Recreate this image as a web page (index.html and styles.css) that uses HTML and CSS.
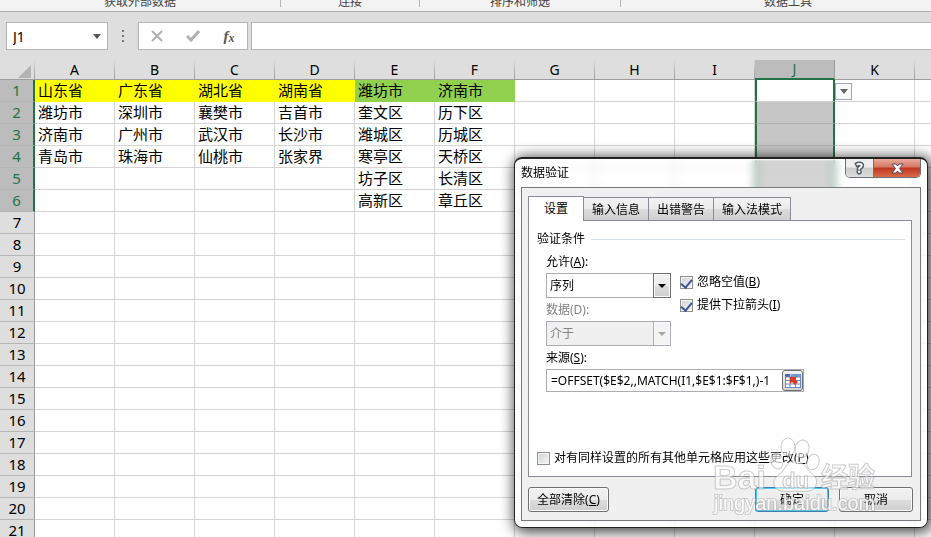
FILE: index.html
```html
<!DOCTYPE html>
<html lang="zh-CN">
<head>
    <meta charset="utf-8">
    <title>数据验证</title>
    <link rel="stylesheet" href="styles.css">
</head>
<body>
    <div class="ribbon">
        <div class="ribbon-group">获取外部数据</div>
        <div class="ribbon-group">连接</div>
        <div class="ribbon-group">排序和筛选</div>
        <div class="ribbon-group">数据工具</div>
    </div>

    <div class="formula-bar">
        <div class="name-box">
            <input type="text" value="J1" aria-label="名称框">
            <svg width="8" height="5" viewBox="0 0 8 5"><path d="M0 0h8L4 5z" fill="#555"/></svg>
        </div>
        <svg class="dots" width="4" height="12" viewBox="0 0 4 12"><path d="M1 0h2v2H1zM1 5h2v2H1zM1 10h2v2H1z" fill="#777"/></svg>
        <div class="formula-buttons">
            <button type="button" aria-label="取消输入"><svg width="12" height="12" viewBox="0 0 12 12"><path d="M1 1l10 10M11 1L1 11" stroke="#b0b0b0" stroke-width="2" fill="none"/></svg></button>
            <button type="button" aria-label="输入"><svg width="14" height="12" viewBox="0 0 14 12"><path d="M1 6l4 4 8-9" stroke="#b0b0b0" stroke-width="3" fill="none"/></svg></button>
            <button type="button" class="fx" aria-label="插入函数">f<span>x</span></button>
        </div>
        <input type="text" class="formula-input" aria-label="编辑栏">
    </div>

    <div class="sheet">
        <table class="grid">
            <thead>
                <tr id="letters">
                    <th class="corner"><svg width="13" height="13" viewBox="0 0 13 13"><path d="M13 0v13H0z" fill="#b3b3b3"/></svg></th>
                </tr>
            </thead>
            <tbody id="rows"></tbody>
        </table>
    </div>

    <button type="button" class="cell-arrow" aria-label="下拉列表"><svg width="8" height="5" viewBox="0 0 8 5"><path d="M0 0h8L4 5z" fill="#666"/></svg></button>

    <div class="dialog">
        <div class="title-bar">
            <span class="title">数据验证</span>
            <div class="window-buttons">
                <button type="button" class="help" aria-label="帮助">?</button>
                <button type="button" class="close" aria-label="关闭"><svg width="13" height="11" viewBox="0 0 13 11"><path d="M1 1h4l1.500 2L8 1h4L8.500 5.500 12 10H8L6.500 8 5 10H1l3.500-4.500z" fill="#fff" stroke="#5c4a52"/></svg></button>
            </div>
        </div>

        <form class="frame">
            <div class="tabs">
                <button type="button" class="tab active">设置</button>
                <button type="button" class="tab">输入信息</button>
                <button type="button" class="tab">出错警告</button>
                <button type="button" class="tab">输入法模式</button>
            </div>

            <div class="panel">
                <div class="section-title">验证条件</div>
                <div class="settings">
                    <div class="fields">
                        <label for="allow">允许(<u>A</u>):</label>
                        <div class="select">
                            <select id="allow"><option>序列</option></select>
                            <span class="arrow"><svg width="8" height="4" viewBox="0 0 8 4"><path d="M0 0h8L4 4z" fill="currentColor"/></svg></span>
                        </div>
                        <label for="data" class="off">数据(D):</label>
                        <div class="select off">
                            <select id="data" disabled><option>介于</option></select>
                            <span class="arrow"><svg width="8" height="4" viewBox="0 0 8 4"><path d="M0 0h8L4 4z" fill="currentColor"/></svg></span>
                        </div>
                    </div>
                    <div class="checks">
                        <label class="check"><input type="checkbox" checked><span>忽略空值(<u>B</u>)</span></label>
                        <label class="check"><input type="checkbox" checked><span>提供下拉箭头(<u>I</u>)</span></label>
                    </div>
                </div>
                <div class="source">
                    <label for="source">来源(<u>S</u>):</label>
                    <div class="source-box">
                        <input type="text" id="source" value="=OFFSET($E$2,,MATCH(I1,$E$1:$F$1,)-1">
                        <button type="button" aria-label="选择区域">
                            <svg width="16" height="14" viewBox="0 0 16 14">
                                <path d="M0 0h16v14H0z" fill="#fff"/>
                                <path d="M0 0h5v3H0z" fill="#3f69b5"/>
                                <path d="M6 0h10v3H6z" fill="#7c9bcf"/>
                                <path d="M0 3h16M0 6.500h16M0 10h16M0 13.500h16M5 0v14M10.500 0v14M15.500 0v14M.5 3v11" stroke="#6c8cc4" fill="none"/>
                                <path d="M5 3h7l-2 2 3 3-3 3-3-3-2 2z" fill="#d93a22"/>
                            </svg>
                        </button>
                    </div>
                </div>
                <label class="check apply"><input type="checkbox"><span>对有同样设置的所有其他单元格应用这些更改(<u>P</u>)</span></label>
            </div>

            <div class="actions">
                <button type="button" class="btn clear">全部清除(<u>C</u>)</button>
                <button type="button" class="btn ok">确定</button>
                <button type="button" class="btn">取消</button>
            </div>
        </form>
    </div>

    <svg class="watermark" width="176" height="84" viewBox="0 0 176 84">
        <g class="mark">
            <ellipse cx="78" cy="14" rx="7" ry="9"/>
            <ellipse cx="92" cy="16" rx="7" ry="9" transform="rotate(12 92 16)"/>
            <ellipse cx="67" cy="28" rx="6" ry="8" transform="rotate(-15 67 28)"/>
            <ellipse cx="103" cy="29" rx="6" ry="8" transform="rotate(20 103 29)"/>
            <path d="M85 28c8 0 10 6 15 11 5 4 8 7 6 13-2 7-10 7-20 6-11 1-20 1-22-6-1-6 2-8 7-12 5-5 6-12 14-12z"/>
            <text x="3" y="56" class="mark-latin">Bai</text>
            <text x="111" y="54" class="mark-cjk">经验</text>
        </g>
        <text x="72" y="55" class="mark-du">du</text>
        <text x="4" y="77" class="mark-url">jingyan.baidu.com</text>
    </svg>

    <script src="sheet.js"></script>
</body>
</html>
```

FILE: styles.css
```css
* {
    box-sizing: border-box;
}

body {
    margin: 0;
    height: 100vh;
    overflow: hidden;
    position: relative;
    display: flex;
    flex-direction: column;
    background-color: #dedede;
    color: #000;
    font-family: "Noto Sans", "Noto Sans CJK SC", sans-serif;
    font-size: 12px;
}

button, input, select {
    font: inherit;
    color: inherit;
    margin: 0;
    padding: 0;
}

svg {
    display: block;
}

/* ribbon */
.ribbon {
    display: grid;
    grid-template-columns: 281px 139px 201px 335px;
    flex: none;
    height: 12px;
    overflow: hidden;
    background-color: #f3f3f3;
    border-bottom: 1px solid #ababab;
}

.ribbon-group {
    display: flex;
    justify-content: center;
    align-items: flex-end;
    height: 7px;
    line-height: 10px;
    color: #444;
    border-right: 1px solid #b5b5b5;
}

/* formula bar */
.formula-bar {
    display: flex;
    flex: none;
    height: 48px;
    padding: 10px 0 10px 6px;
}

.name-box {
    display: flex;
    align-items: center;
    width: 102px;
    padding: 0 6px;
    background-color: #fff;
    border: 1px solid #b5b5b5;
}

.name-box input {
    flex: 1;
    min-width: 0;
    border: none;
    font-size: 14px;
}

.dots {
    align-self: center;
    margin: 0 13px;
}

.formula-buttons {
    display: flex;
    width: 110px;
    margin-right: 3px;
    background-color: #fff;
    border: 1px solid #b5b5b5;
}

.formula-buttons button {
    flex: 1;
    display: flex;
    align-items: center;
    justify-content: center;
    background: none;
    border: none;
}

.formula-buttons .fx {
    font: italic bold 15px "Liberation Serif", serif;
    color: #555;
}

.fx span {
    font-size: 12px;
    padding-top: 4px;
}

.formula-input {
    flex: 1;
    min-width: 0;
    border: 1px solid #b5b5b5;
    border-right: none;
    background-color: #fff;
}

/* sheet */
.sheet {
    flex: 1;
    min-height: 0;
    overflow: hidden;
}

.grid {
    table-layout: fixed;
    width: 995px;
    border-spacing: 0;
    font-size: 15px;
    line-height: 20px;
}

.grid th {
    width: 80px;
    height: 20px;
    padding: 0;
    font-size: 14px;
    font-weight: normal;
    line-height: 18px;
    background-color: #dedede;
    border-bottom: 1px solid #9b9b9b;
    border-right: 1px solid;
    border-image: linear-gradient(#dedede, #9b9b9b) 1;
}

.grid .corner {
    width: 35px;
}

.corner svg {
    margin: 3px 0 0 18px;
}

.grid tbody th {
    height: 22px;
    font-size: 15px;
    line-height: 21px;
    border-image: none;
    border-color: #b5b5b5;
    border-right-color: #9b9b9b;
}

.grid td {
    height: 22px;
    padding: 0 3px;
    line-height: 21px;
    white-space: nowrap;
    background-color: #fff;
    border-right: 1px solid #d4d4d4;
    border-bottom: 1px solid #d4d4d4;
}

.grid .picked {
    color: #217346;
    background-color: #bcbcbc;
}

.grid tbody .picked {
    border-right: 2px solid #217346;
}

.grid thead .picked {
    border-image: none;
    border-color: #9b9b9b;
    border-bottom: 2px solid #217346;
}

.grid .yellow {
    background-color: #ff0;
    border-color: #ff0;
}

.grid .green {
    background-color: #92d050;
    border-color: #92d050;
}

.grid .range {
    border-right: 2px solid #217346;
    border-left: 2px solid #217346;
}

.grid .fill {
    background-color: #c6c6c6;
    border-bottom-color: #b0b0b0;
}

.cell-arrow {
    position: absolute;
    left: 835px;
    top: 83px;
    display: flex;
    align-items: center;
    justify-content: center;
    width: 17px;
    height: 17px;
    background-color: #f8f9fb;
    border: 1px solid #a0a8b4;
}

/* dialog */
.dialog {
    position: absolute;
    left: 514px;
    top: 157px;
    width: 414px;
    padding: 0 6px 6px;
    background-color: rgba(255, 255, 255, 0.25);
    backdrop-filter: blur(4px);
    border: 1px solid #222;
    border-top-width: 2px;
    border-radius: 8px;
    box-shadow: inset 0 0 2px 1px #fff, 2px 2px 14px 2px rgba(0, 0, 0, 0.75);
    line-height: 20px;
}

.title-bar {
    display: flex;
    justify-content: space-between;
    height: 28px;
}

.title {
    padding-top: 4px;
}

.window-buttons {
    display: flex;
    height: 19px;
    border: 1px solid #6b6f78;
    border-top: none;
    border-radius: 0 0 5px 5px;
    overflow: hidden;
}

.window-buttons button {
    display: flex;
    align-items: center;
    justify-content: center;
    border: none;
}

.window-buttons .help {
    width: 28px;
    font-size: 14px;
    font-weight: bold;
    color: #fff;
    -webkit-text-stroke: 3px #555a66;
    paint-order: stroke fill;
    background: linear-gradient(#eee 45%, #ccc 50%, #ddd);
    border-right: 1px solid #6b6f78;
}

.window-buttons .close {
    width: 46px;
    background: linear-gradient(#e8a99b, #d57763 45%, #bd3520 50%, #d96c4c);
}

.frame {
    padding: 8px 8px 8px 6px;
    background-color: #f0f0f0;
    border: 1px solid #76797e;
}

.tabs {
    display: flex;
    align-items: flex-end;
}

.tab {
    height: 23px;
    padding: 1px 8px 0;
    white-space: nowrap;
    border: 1px solid #898c95;
    border-left-width: 0;
    border-bottom: none;
    background: linear-gradient(#f3f3f3, #ebebeb 50%, #dcdcdc 52%, #cfcfcf);
}

.tab.active {
    position: relative;
    height: 25px;
    padding: 0 15px;
    margin-bottom: -1px;
    border-left-width: 1px;
    background: #fff;
}

.panel {
    height: 257px;
    display: flex;
    flex-direction: column;
    padding: 8px 6px 8px 8px;
    background-color: #fff;
    border: 1px solid #898c95;
}

.section-title {
    display: flex;
    align-items: center;
    gap: 6px;
    margin-bottom: 3px;
}

.section-title::after {
    content: "";
    flex: 1;
    height: 1px;
    background-color: #d5dfe5;
}

.settings {
    display: flex;
    gap: 9px;
    padding-left: 9px;
}

.fields {
    display: flex;
    flex-direction: column;
    gap: 2px;
    width: 125px;
}

.fields label, .source label {
    height: 19px;
}

.select {
    position: relative;
    height: 25px;
}

.select select {
    appearance: none;
    width: 100%;
    height: 100%;
    padding: 0 3px;
    background-color: #fff;
    border: 1px solid #abadb3;
    border-radius: 0;
    opacity: 1;
}

.arrow {
    position: absolute;
    top: 0;
    right: 0;
    bottom: 0;
    width: 18px;
    display: flex;
    align-items: center;
    justify-content: center;
    background: linear-gradient(#f2f2f2, #ebebeb 50%, #dcdcdc 52%, #cfcfcf);
    border: 1px solid #707070;
    box-shadow: inset 0 0 0 1px #fafafa;
    pointer-events: none;
}

.off {
    color: #838383;
}

.off select {
    background-color: #f0f0f0;
}

.off .arrow {
    color: #a5a5a5;
    background: #f4f4f4;
    border-color: #abadb3;
}

.checks {
    display: flex;
    flex-direction: column;
    gap: 3px;
    padding-top: 20px;
}

.check {
    display: flex;
    align-items: center;
    gap: 4px;
    white-space: nowrap;
}

.check input {
    appearance: none;
    display: grid;
    place-items: center;
    flex: none;
    width: 13px;
    height: 13px;
    border: 1px solid #8e8f8f;
    background: linear-gradient(135deg, #cdd1d6, #f6f6f6);
    box-shadow: inset 0 0 0 1px #f4f4f4;
}

.check input:checked::after {
    content: "";
    width: 5px;
    height: 9px;
    margin-bottom: 2px;
    border: solid #3d549b;
    border-width: 0 2px 2px 0;
    transform: rotate(40deg);
}

.source {
    display: flex;
    flex-direction: column;
    gap: 2px;
    padding: 2px 0 0 9px;
}

.source-box {
    display: flex;
    width: 258px;
    height: 23px;
    background-color: #fff;
    border: 1px solid #abadb3;
}

.source-box input {
    flex: 1;
    min-width: 0;
    padding-left: 4px;
    border: none;
    background: none;
}

.source-box button {
    display: flex;
    align-items: center;
    justify-content: center;
    width: 21px;
    background: linear-gradient(#f2f2f2, #d4d4d4);
    border: 1px solid #707070;
    border-radius: 3px;
}

.apply {
    margin-top: auto;
}

.actions {
    display: flex;
    gap: 10px;
    padding-top: 10px;
    margin-right: -1px;
}

.btn {
    width: 74px;
    height: 25px;
    white-space: nowrap;
    background: linear-gradient(#f2f2f2, #ebebeb 50%, #dcdcdc 52%, #cfcfcf);
    border: 1px solid #707070;
    border-radius: 3px;
    box-shadow: inset 0 0 0 1px #fafafa;
}

.btn.clear {
    width: 81px;
    margin-right: auto;
}

.btn.ok {
    border-color: #3c7fb1;
    box-shadow: inset 0 0 0 1px #41cdf3;
}

/* watermark */
.watermark {
    position: absolute;
    left: 710px;
    top: 433px;
    pointer-events: none;
}

.mark {
    fill: rgba(255, 255, 255, 0.6);
    stroke: rgba(160, 160, 160, 0.55);
    stroke-width: 1px;
}

.mark-latin {
    font: bold 34px "Liberation Sans", sans-serif;
}

.mark-cjk {
    font: bold 27px "Noto Sans CJK SC", sans-serif;
}

.mark-du {
    font: bold 22px "Liberation Sans", sans-serif;
    fill: rgba(255, 255, 255, 0.8);
    stroke: rgba(160, 160, 160, 0.6);
}

.mark-url {
    font: 20px "Liberation Sans", sans-serif;
    fill: rgba(255, 255, 255, 0.9);
    stroke: rgba(170, 170, 170, 0.5);
    stroke-width: 2px;
    paint-order: stroke fill;
}
```

FILE: sheet.js
```js
var columns = ["A", "B", "C", "D", "E", "F", "G", "H", "I", "J", "K", "L"];
var values = [
    ["山东省", "广东省", "湖北省", "湖南省", "潍坊市", "济南市"],
    ["潍坊市", "深圳市", "襄樊市", "吉首市", "奎文区", "历下区"],
    ["济南市", "广州市", "武汉市", "长沙市", "潍城区", "历城区"],
    ["青岛市", "珠海市", "仙桃市", "张家界", "寒亭区", "天桥区"],
    ["", "", "", "", "坊子区", "长清区"],
    ["", "", "", "", "高新区", "章丘区"]
];

function addCell(row, tag, text, className) {
    var cell = document.createElement(tag);
    cell.textContent = text;
    cell.className = className;
    row.appendChild(cell);
}

// Column letters
var letters = document.getElementById("letters");
columns.forEach(function (name) {
    addCell(letters, "th", name, name === "J" ? "picked" : "");
});

// Rows, J1:J6 is the selected range
var body = document.getElementById("rows");
for (var r = 0; r < 21; r++) {
    var row = document.createElement("tr");
    addCell(row, "th", r + 1, r < 6 ? "picked" : "");
    for (var c = 0; c < columns.length; c++) {
        var className = "";
        if (r === 0 && c < 6) {
            className = c < 4 ? "yellow" : "green";
        }
        if (columns[c] === "J" && r < 6) {
            className = r === 0 ? "range" : "range fill";
        }
        addCell(row, "td", values[r] && values[r][c] || "", className);
    }
    body.appendChild(row);
}
```
